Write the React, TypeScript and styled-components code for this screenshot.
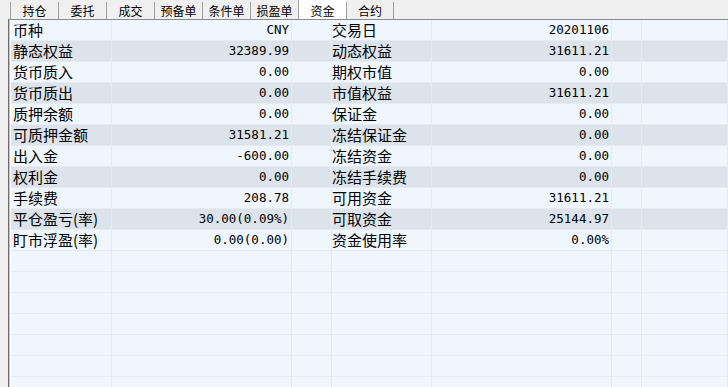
import React from "react";
import styled, { createGlobalStyle } from "styled-components";

const Global = createGlobalStyle`
  html, body { margin: 0; padding: 0; background: #f0f0f0; }
  body { width: 728px; height: 387px; overflow: hidden; }
`;

const Window = styled.div`
  width: 728px;
  height: 387px;
  display: flex;
  flex-direction: column;
  background: #f0f0f0;
  overflow: hidden;
`;

const TabBar = styled.div`
  height: 19px;
  display: flex;
  align-items: flex-end;
  padding-left: 10px;
`;

const Tab = styled.div<{ $active?: boolean; $last?: boolean }>`
  width: 48px;
  height: ${(p) => (p.$active ? 19 : 17)}px;
  border-left: 1px solid #a0a0a0;
  border-right: ${(p) => (p.$last ? "1px solid #a0a0a0" : "none")};
  background: ${(p) => (p.$active ? "#ffffff" : "transparent")};
  display: flex;
  align-items: center;
  justify-content: center;
  padding-top: ${(p) => (p.$active ? 2 : 0)}px;
  box-sizing: border-box;
  font-family: "Noto Sans CJK SC", sans-serif;
  font-size: 12px;
  line-height: 16px;
  color: #000;
`;

const Frame = styled.div`
  flex: 1;
  margin-left: 8px;
  border-left: 1px solid #6e6e6e;
  border-top: 1px solid #8a8a8a;
  display: flex;
  min-height: 0;
`;

const Inner = styled.div`
  flex: 1;
  border-left: 1px solid #c4c4c4;
  display: flex;
  min-height: 0;
`;

const Grid = styled.div`
  flex: 1;
  border-left: 1px solid #ffffff;
  display: grid;
  grid-template-columns: 101px 180px 40px 100px 180px 30px 1fr;
  grid-auto-rows: 21px;
  align-content: start;
  overflow: hidden;
`;

const Cell = styled.div<{ $alt?: boolean; $align?: "left" | "right"; $num?: boolean; $pad?: number }>`
  background: ${(p) => (p.$alt ? "#dde3ea" : "#eff6fe")};
  border-right: 1px solid #e7ebef;
  border-bottom: 1px solid #e7ebef;
  box-sizing: border-box;
  display: flex;
  align-items: center;
  justify-content: ${(p) => (p.$align === "right" ? "flex-end" : "flex-start")};
  padding: 0 2px 1px ${(p) => p.$pad ?? 2}px;
  white-space: nowrap;
  color: #000;
  font-family: ${(p) =>
    p.$num ? '"DejaVu Sans Mono", "Liberation Mono", monospace' : '"Noto Sans CJK SC", sans-serif'};
  font-size: ${(p) => (p.$num ? "12.5px" : "15px")};
  line-height: 19px;
`;

const tabs = ["持仓", "委托", "成交", "预备单", "条件单", "损盈单", "资金", "合约"];

const rows: [string, string, string, string][] = [
  ["币种", "CNY", "交易日", "20201106"],
  ["静态权益", "32389.99", "动态权益", "31611.21"],
  ["货币质入", "0.00", "期权市值", "0.00"],
  ["货币质出", "0.00", "市值权益", "31611.21"],
  ["质押余额", "0.00", "保证金", "0.00"],
  ["可质押金额", "31581.21", "冻结保证金", "0.00"],
  ["出入金", "-600.00", "冻结资金", "0.00"],
  ["权利金", "0.00", "冻结手续费", "0.00"],
  ["手续费", "208.78", "可用资金", "31611.21"],
  ["平仓盈亏(率)", "30.00(0.09%)", "可取资金", "25144.97"],
  ["盯市浮盈(率)", "0.00(0.00)", "资金使用率", "0.00%"],
];

const TOTAL_ROWS = 18;

export default function App() {
  const all = Array.from({ length: TOTAL_ROWS }, (_, i) => rows[i] ?? ["", "", "", ""]);
  return (
    <>
      <Global />
      <Window>
        <TabBar>
          {tabs.map((t, i) => (
            <Tab key={t} $active={t === "资金"} $last={i === tabs.length - 1}>
              {t}
            </Tab>
          ))}
        </TabBar>
        <Frame>
          <Inner>
            <Grid>
              {all.map((r, i) => {
                const alt = i < rows.length && i % 2 === 1;
                return (
                  <React.Fragment key={i}>
                    <Cell $alt={alt}>{r[0]}</Cell>
                    <Cell $alt={alt} $align="right" $num>
                      {r[1]}
                    </Cell>
                    <Cell $alt={alt} />
                    <Cell $alt={alt} $pad={0}>
                      {r[2]}
                    </Cell>
                    <Cell $alt={alt} $align="right" $num>
                      {r[3]}
                    </Cell>
                    <Cell $alt={alt} />
                    <Cell $alt={alt} />
                  </React.Fragment>
                );
              })}
            </Grid>
          </Inner>
        </Frame>
      </Window>
    </>
  );
}
